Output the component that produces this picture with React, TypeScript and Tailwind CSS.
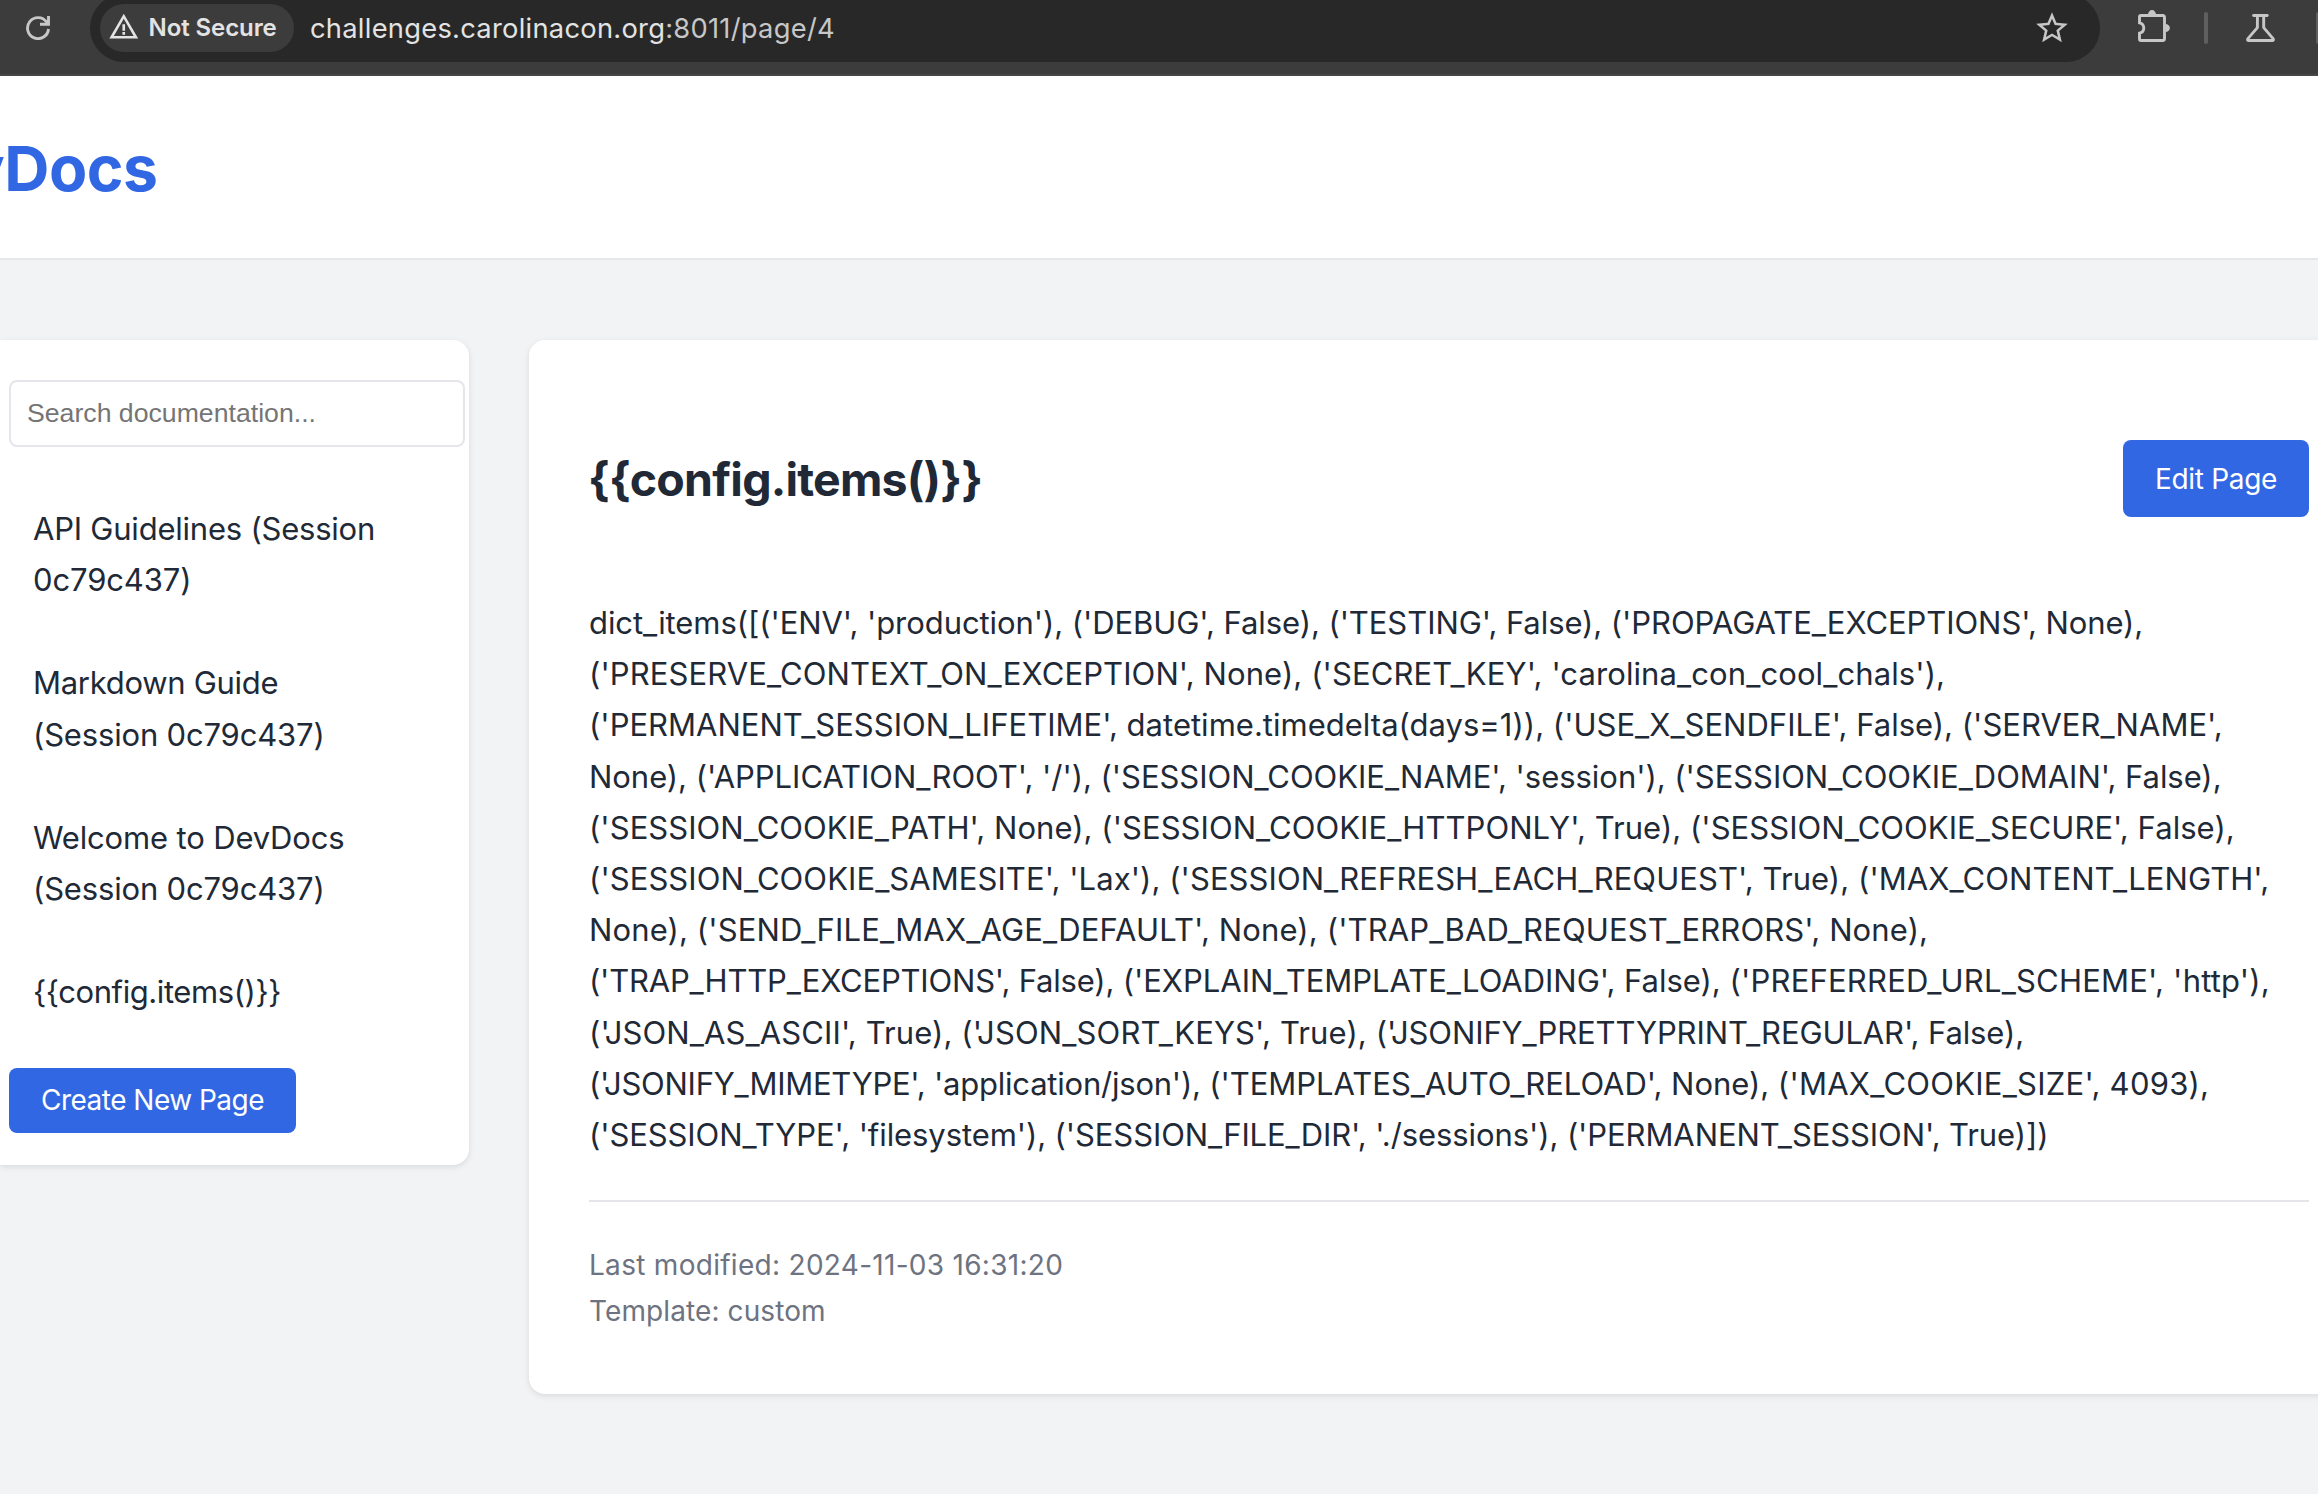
import { MdStarBorder, MdWarningAmber } from "react-icons/md";

type Segment = { text: string; tracking: string };

const bodyLines: Segment[][] = [
  [{ text: "dict_items([('ENV', 'production'), ('DEBUG', False), ('TESTING', False), ('PROPAGATE_EXCEPTIONS', None),", tracking: "tracking-[-0.073px]" }],
  [{ text: "('PRESERVE_CONTEXT_ON_EXCEPTION', None), ('SECRET_KEY', 'carolina_con_cool_chals'),", tracking: "tracking-[0.1px]" }],
  [{ text: "('PERMANENT_SESSION_LIFETIME', datetime.timedelta(days=1)), ('USE_X_SENDFILE', False), ('SERVER_NAME',", tracking: "tracking-[0.015px]" }],
  [{ text: "None), ('APPLICATION_ROOT', '/'), ('SESSION_COOKIE_NAME', 'session'), ('SESSION_COOKIE_DOMAIN', False),", tracking: "tracking-[-0.039px]" }],
  [{ text: "('SESSION_COOKIE_PATH', None), ('SESSION_COOKIE_HTTPONLY', True), ('SESSION_COOKIE_SECURE', False),", tracking: "tracking-[0.047px]" }],
  [{ text: "('SESSION_COOKIE_SAMESITE', 'Lax'), ('SESSION_REFRESH_EACH_REQUEST', True), ('MAX_CONTENT_LENGTH',", tracking: "tracking-[0.068px]" }],
  [{ text: "None), ('SEND_FILE_MAX_AGE_DEFAULT', None), ('TRAP_BAD_REQUEST_ERRORS', None),", tracking: "tracking-[0.132px]" }],
  [
    { text: "('TRAP_HTTP_EXCEPTIONS', False), ", tracking: "tracking-[-0.19px]" },
    { text: "('EXPLAIN_TEMPLATE_LOADING', False), ", tracking: "tracking-[-0.02px]" },
    { text: "('PREFERRED_URL_SCHEME', 'http'),", tracking: "tracking-[0.21px]" },
  ],
  [
    { text: "('JSON_AS_ASCII', True), ", tracking: "tracking-[0.11px]" },
    { text: "('JSON_SORT_KEYS', True), ", tracking: "tracking-[0.13px]" },
    { text: "('JSONIFY_PRETTYPRINT_REGULAR', False),", tracking: "tracking-[-0.116px]" },
  ],
  [
    { text: "('JSONIFY_MIMETYPE', ", tracking: "tracking-[-0.26px]" },
    { text: "'application/json'), ", tracking: "tracking-[-0.22px]" },
    { text: "('TEMPLATES_AUTO_RELOAD', None), ", tracking: "tracking-[-0.03px]" },
    { text: "('MAX_COOKIE_SIZE', 4093),", tracking: "tracking-[0.25px]" },
  ],
  [{ text: "('SESSION_TYPE', 'filesystem'), ('SESSION_FILE_DIR', './sessions'), ('PERMANENT_SESSION', True)])", tracking: "tracking-[-0.09px]" }],
];

const navItems: Segment[][] = [
  [
    { text: "API Guidelines (Session", tracking: "tracking-[-0.22px]" },
    { text: "0c79c437)", tracking: "tracking-[-0.12px]" },
  ],
  [
    { text: "Markdown Guide", tracking: "tracking-[-0.29px]" },
    { text: "(Session 0c79c437)", tracking: "tracking-[-0.17px]" },
  ],
  [
    { text: "Welcome to DevDocs", tracking: "tracking-[-0.16px]" },
    { text: "(Session 0c79c437)", tracking: "tracking-[-0.17px]" },
  ],
  [{ text: "{{config.items()}}", tracking: "tracking-[-0.42px]" }],
];

function ReloadIcon() {
  return (
    <svg className="size-6 shrink-0" viewBox="0 0 24 24" fill="none" stroke="#c7c7c7" strokeWidth="2.9">
      <path d="M22.5 13A10.5 10.5 0 1 1 20.6 6L22.4 8.2" />
      <path d="M22.5 0V8.3H14" />
    </svg>
  );
}

function PuzzleIcon() {
  return (
    <svg className="h-8 w-8 shrink-0" viewBox="0 0 32 32" fill="none">
      <path
        d="M3.2 5.5H25a1.5 1.5 0 0 1 1.5 1.5V29a1.5 1.5 0 0 1-1.5 1.5H3A1.5 1.5 0 0 1 1.5 29V23.2A5.3 5.3 0 0 0 1.5 12.8V7A1.5 1.5 0 0 1 3 5.5Z"
        stroke="#c7c7c7"
        strokeWidth="2.9"
      />
      <path d="M10 4.5a4 4.4 0 0 1 8 0ZM27.5 14a4.4 4 0 0 1 0 8Z" fill="#c7c7c7" />
    </svg>
  );
}

function FlaskIcon() {
  return (
    <svg className="h-7 w-[29px] shrink-0" viewBox="0 0 29 28" fill="none" stroke="#c7c7c7" strokeWidth="2.9" strokeLinecap="round" strokeLinejoin="round">
      <path d="M7.6 1.5H21.2" />
      <path d="M11.4 2V13.6L1.9 24.6Q1 26.5 2.8 26.5H26.2Q28 26.5 27.1 24.6L17.7 13.6V2" />
    </svg>
  );
}

function Toolbar() {
  return (
    <div className="flex h-[76px] shrink-0 items-start border-b-2 border-[#484748] bg-[#3c3c3c]">
      <div className="mt-4 ml-[26px]">
        <ReloadIcon />
      </div>
      <div className="-mt-1.5 ml-10 flex h-[68px] w-[2010px] items-center rounded-full bg-[#282828] pl-2.5">
        <div className="flex h-12 w-[194px] items-center rounded-full bg-[#3c3c3c] pl-2">
          <MdWarningAmber className="-mt-0.5 size-[31.5px] shrink-0 text-[#e3e3e3]" />
          <span className="ml-[9px] text-[24px] leading-[30px] font-semibold tracking-[-0.08px] whitespace-nowrap text-[#e3e3e3]">Not Secure</span>
        </div>
        <div className="ml-4 flex-1 pt-px text-[27.3px] leading-[34px] tracking-[0.27px] whitespace-nowrap text-[#c7c7c7]">
          <span className="text-[#e3e3e3]">challenges.carolinacon.org</span>:8011/page/4
        </div>
        <MdStarBorder className="mr-[29px] size-[38px] text-[#c7c7c7]" />
      </div>
      <div className="mt-2.5 ml-[38px]">
        <PuzzleIcon />
      </div>
      <div className="mt-3 ml-[34px] h-8 w-1 rounded-full bg-[#5f5f5f]" />
      <div className="mt-3.5 ml-[37.5px]">
        <FlaskIcon />
      </div>
      <div className="mt-3 ml-auto h-8 w-0.5 rounded-l-full bg-[#5f5f5f]" />
    </div>
  );
}

export default function App() {
  return (
    <div className="flex h-[1494px] w-[2318px] flex-col overflow-hidden bg-[#f2f3f5] font-[Inter,sans-serif] text-[#212936]">
      <Toolbar />
      <header className="flex h-[184px] shrink-0 items-center border-b-2 border-[#e5e7eb] bg-white">
        <div className="mt-0.5 -ml-[113px] text-[62.5px] leading-[80px] font-bold tracking-[-0.5px] text-[#3267e3]">DevDocs</div>
      </header>
      <main className="flex items-start gap-[60px] pt-20">
        <aside className="flex h-[825px] w-[469px] shrink-0 flex-col items-start rounded-r-[16px] bg-white pt-10 pl-[9px] shadow-[0_2px_6px_rgba(0,0,0,0.1)]">
          <input
            className="h-[67px] w-[456px] rounded-[8px] border-2 border-[#e5e5eb] px-4 font-['Liberation_Sans',sans-serif] text-[26.67px] placeholder:text-[#757575]"
            placeholder="Search documentation..."
          />
          <nav className="mt-14 flex flex-col gap-[52px] pl-6 text-[31px] leading-[51.2px] whitespace-nowrap">
            {navItems.map((lines, i) => (
              <a key={i} className="flex flex-col">
                {lines.map((line) => (
                  <span key={line.text} className={line.tracking}>
                    {line.text}
                  </span>
                ))}
              </a>
            ))}
          </nav>
          <button className="mt-[50.5px] h-[65px] w-[287px] rounded-[8px] bg-[#3267e3] text-[28px] tracking-[-0.52px] whitespace-nowrap text-white">
            Create New Page
          </button>
        </aside>
        <article className="flex h-[1054px] w-[1840px] shrink-0 flex-col rounded-l-[16px] bg-white pt-[100px] pl-[60px] shadow-[0_2px_6px_rgba(0,0,0,0.1)]">
          <div className="flex h-[77px] w-[1720px] items-center justify-between">
            <h1 className="-ml-px text-[46.5px] leading-[76px] font-bold tracking-[-0.79px] whitespace-nowrap">{"{{config.items()}}"}</h1>
            <button className="h-[77px] w-[186px] rounded-[8px] bg-[#3267e3] text-[28px] tracking-[-0.32px] whitespace-nowrap text-white">
              Edit Page
            </button>
          </div>
          <div className="mt-20 flex flex-col text-[31px] leading-[51.2px] whitespace-pre">
            {bodyLines.map((segments, i) => (
              <p key={i}>
                {segments.map((segment) => (
                  <span key={segment.text} className={segment.tracking}>
                    {segment.text}
                  </span>
                ))}
              </p>
            ))}
          </div>
          <footer className="mt-[39.8px] flex w-[1720px] flex-col border-t-2 border-[#e5e5eb] pt-10 text-[28px] leading-[46px] text-[#6d7380]">
            <span className="tracking-[0.29px]">Last modified: 2024-11-03 16:31:20</span>
            <span className="tracking-[0.1px]">Template: custom</span>
          </footer>
        </article>
      </main>
    </div>
  );
}
